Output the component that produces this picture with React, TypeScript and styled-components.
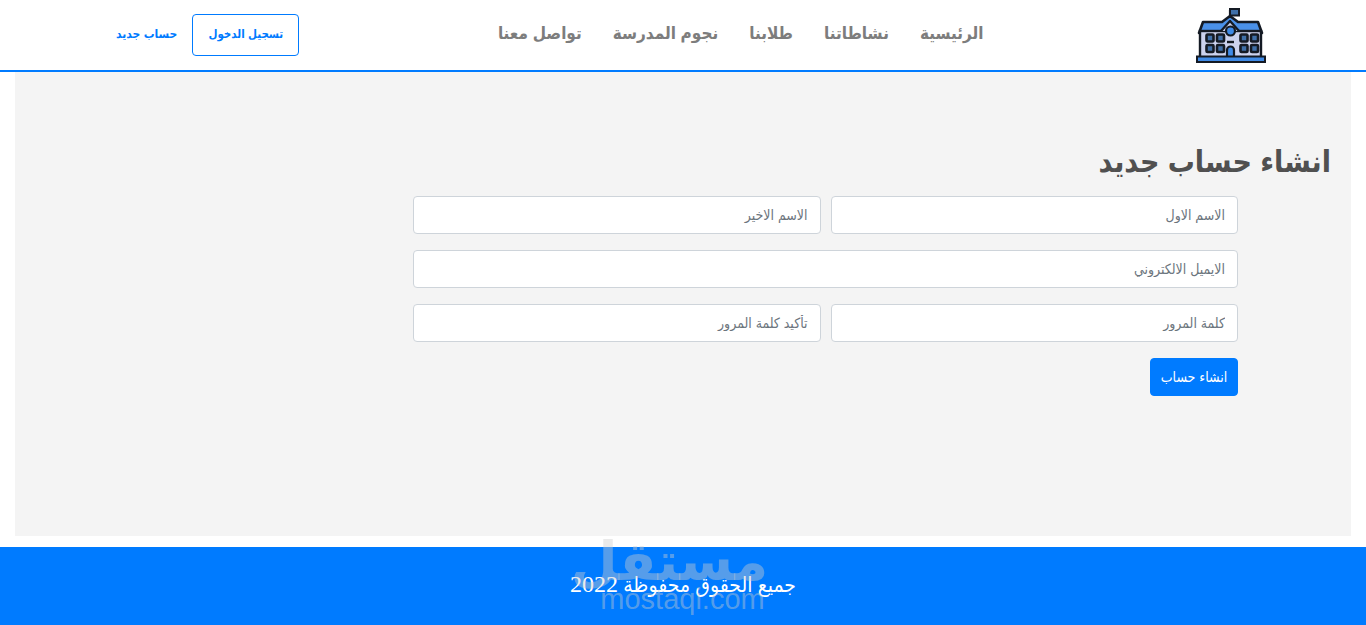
import styled, { createGlobalStyle } from 'styled-components';

const navLinks = ['الرئيسية', 'نشاطاتنا', 'طلابنا', 'نجوم المدرسة', 'تواصل معنا'];

const GlobalStyle = createGlobalStyle`
  html, body {
    margin: 0;
    padding: 0;
    background: #fff;
  }

  * {
    box-sizing: border-box;
  }
`;

const SchoolLogo = () => (
  <svg width="70" height="56" viewBox="0 0 70 56">
    <path d="M34 15V3" stroke="#141a24" strokeWidth="2.200" />
    <rect x="34" y="2" width="9" height="6.500" fill="#3f6fa8" stroke="#141a24" strokeWidth="2" />
    <path d="M3 26 L7 15 H26 L34 9 L42 15 H62 L66 26Z" fill="#4a90e8" stroke="#141a24" strokeWidth="2.600" strokeLinejoin="round" />
    <rect x="4" y="24" width="61" height="27" fill="#ccd2ee" stroke="#141a24" strokeWidth="2.400" />
    <path d="M25 24 L34 14 L43 24" fill="#ccd2ee" stroke="#141a24" strokeWidth="2.400" strokeLinejoin="round" />
    <circle cx="34.500" cy="24" r="4.500" fill="#3f8ae6" stroke="#141a24" strokeWidth="2.200" />
    <path d="M31 35H38" stroke="#141a24" strokeWidth="2.400" />
    {[10.500, 21, 44.500, 55].map(x => [27.500, 38].map(y => (
      <rect key={`${x}-${y}`} x={x} y={y} width="7" height="7" rx="1" fill="#3f6fa8" stroke="#141a24" strokeWidth="2.600" />
    )))}
    <path d="M31 50V43a3.500 3.500 0 0 1 7 0V50Z" fill="#3f8ae6" stroke="#141a24" strokeWidth="2.200" />
    <rect x="1" y="49.500" width="68" height="5.500" fill="#3f8ae6" stroke="#141a24" strokeWidth="2" />
  </svg>
);

const App = () => {
  return (
    <Page dir="rtl">
      <GlobalStyle />
      <Header>
        <LogoLink href="#">
          <SchoolLogo />
        </LogoLink>
        <Nav>
          {navLinks.map(link => (
            <NavLink key={link} href="#">{link}</NavLink>
          ))}
        </Nav>
        <Actions>
          <LoginButton href="#">تسجيل الدخول</LoginButton>
          <SignupLink href="#">حساب جديد</SignupLink>
        </Actions>
      </Header>

      <Main>
        <Title>انشاء حساب جديد</Title>
        <Form onSubmit={e => e.preventDefault()}>
          <Row>
            <Input type="text" placeholder="الاسم الاول" />
            <Input type="text" placeholder="الاسم الاخير" />
          </Row>
          <Row>
            <Input type="email" placeholder="الايميل الالكتروني" />
          </Row>
          <Row>
            <Input type="password" placeholder="كلمة المرور" />
            <Input type="password" placeholder="تأكيد كلمة المرور" />
          </Row>
          <Submit type="submit">انشاء حساب</Submit>
        </Form>
      </Main>

      <Footer>
        <Copyright>جميع الحقوق محفوظة <Year>2022</Year></Copyright>
        <Watermark aria-hidden="true">
          <WatermarkArabic>مستقل</WatermarkArabic>
          <WatermarkLatin>mostaqi.com</WatermarkLatin>
        </Watermark>
      </Footer>
    </Page>
  );
};

const Page = styled.div`
  width: 1366px;
  height: 625px;
  overflow: hidden;
  display: flex;
  flex-direction: column;
  font-family: "Liberation Sans", "DejaVu Sans", sans-serif;
  font-stretch: condensed;
  background: #fff;
`;

const Header = styled.header`
  height: 72px;
  flex: none;
  display: flex;
  align-items: center;
  justify-content: space-between;
  padding: 0 100px 0 116px;
  border-bottom: 2px solid #007bff;
`;

const LogoLink = styled.a`
  display: block;
  width: 70px;
  height: 56px;
`;

const Nav = styled.nav`
  display: flex;
  gap: 31px;
  margin-top: -3px;
  margin-right: 14px;
`;

const NavLink = styled.a`
  font-size: 17px;
  font-weight: 700;
  color: #7d7d7d;
  text-decoration: none;
`;

const Actions = styled.div`
  display: flex;
  align-items: center;
  gap: 15px;
`;

const LoginButton = styled.a`
  display: flex;
  align-items: center;
  justify-content: center;
  width: 107px;
  height: 42px;
  padding-bottom: 2px;
  font-size: 11.500px;
  font-weight: 700;
  color: #007bff;
  border: 1px solid #007bff;
  border-radius: 4px;
  text-decoration: none;
`;

const SignupLink = styled.a`
  margin-top: -2px;
  font-size: 12px;
  font-weight: 700;
  color: #007bff;
  text-decoration: none;
`;

const Main = styled.main`
  height: 464px;
  flex: none;
  margin: 0 15px;
  padding: 70px 20px 0 0;
  background: #f4f4f4;
`;

const Title = styled.h2`
  margin: 0 0 14px;
  font-size: 30px;
  line-height: 40px;
  font-weight: 700;
  color: #505050;
`;

const Form = styled.form`
  width: 825px;
  margin-right: 93px;
  display: flex;
  flex-direction: column;
  gap: 16px;
`;

const Row = styled.div`
  display: flex;
  gap: 10px;
`;

const Input = styled.input`
  flex: 1;
  min-width: 0;
  height: 38px;
  padding: 6px 12px;
  font-family: inherit;
  font-stretch: inherit;
  font-size: 14px;
  color: #495057;
  background: #fff;
  border: 1px solid #ced4da;
  border-radius: 4px;

  &::placeholder {
    color: #6c757d;
  }
`;

const Submit = styled.button`
  align-self: flex-start;
  width: 88px;
  height: 38px;
  padding: 0;
  font-family: inherit;
  font-stretch: inherit;
  font-size: 14px;
  color: #fff;
  background: #007bff;
  border: 1px solid #007bff;
  border-radius: 4px;
`;

const Footer = styled.footer`
  position: relative;
  height: 78px;
  flex: none;
  margin-top: 11px;
  padding-bottom: 3px;
  display: flex;
  align-items: center;
  justify-content: center;
  background: #007bff;
`;

const Copyright = styled.p`
  margin: 0;
  font-family: "Liberation Serif", "DejaVu Sans", serif;
  font-size: 21px;
  color: #fff;
`;

const Year = styled.span`
  font-size: 24px;
`;

const Watermark = styled.div`
  position: absolute;
  left: 600px;
  top: -12px;
  width: 165px;
  display: flex;
  flex-direction: column;
  align-items: center;
  font-stretch: normal;
  color: rgba(205, 205, 205, .42);
  pointer-events: none;
`;

const WatermarkArabic = styled.span`
  padding-right: 26px;
  font-size: 54px;
  line-height: 52px;
  font-weight: 700;
`;

const WatermarkLatin = styled.span`
  font-size: 29px;
  line-height: 24px;
`;

export default App;
